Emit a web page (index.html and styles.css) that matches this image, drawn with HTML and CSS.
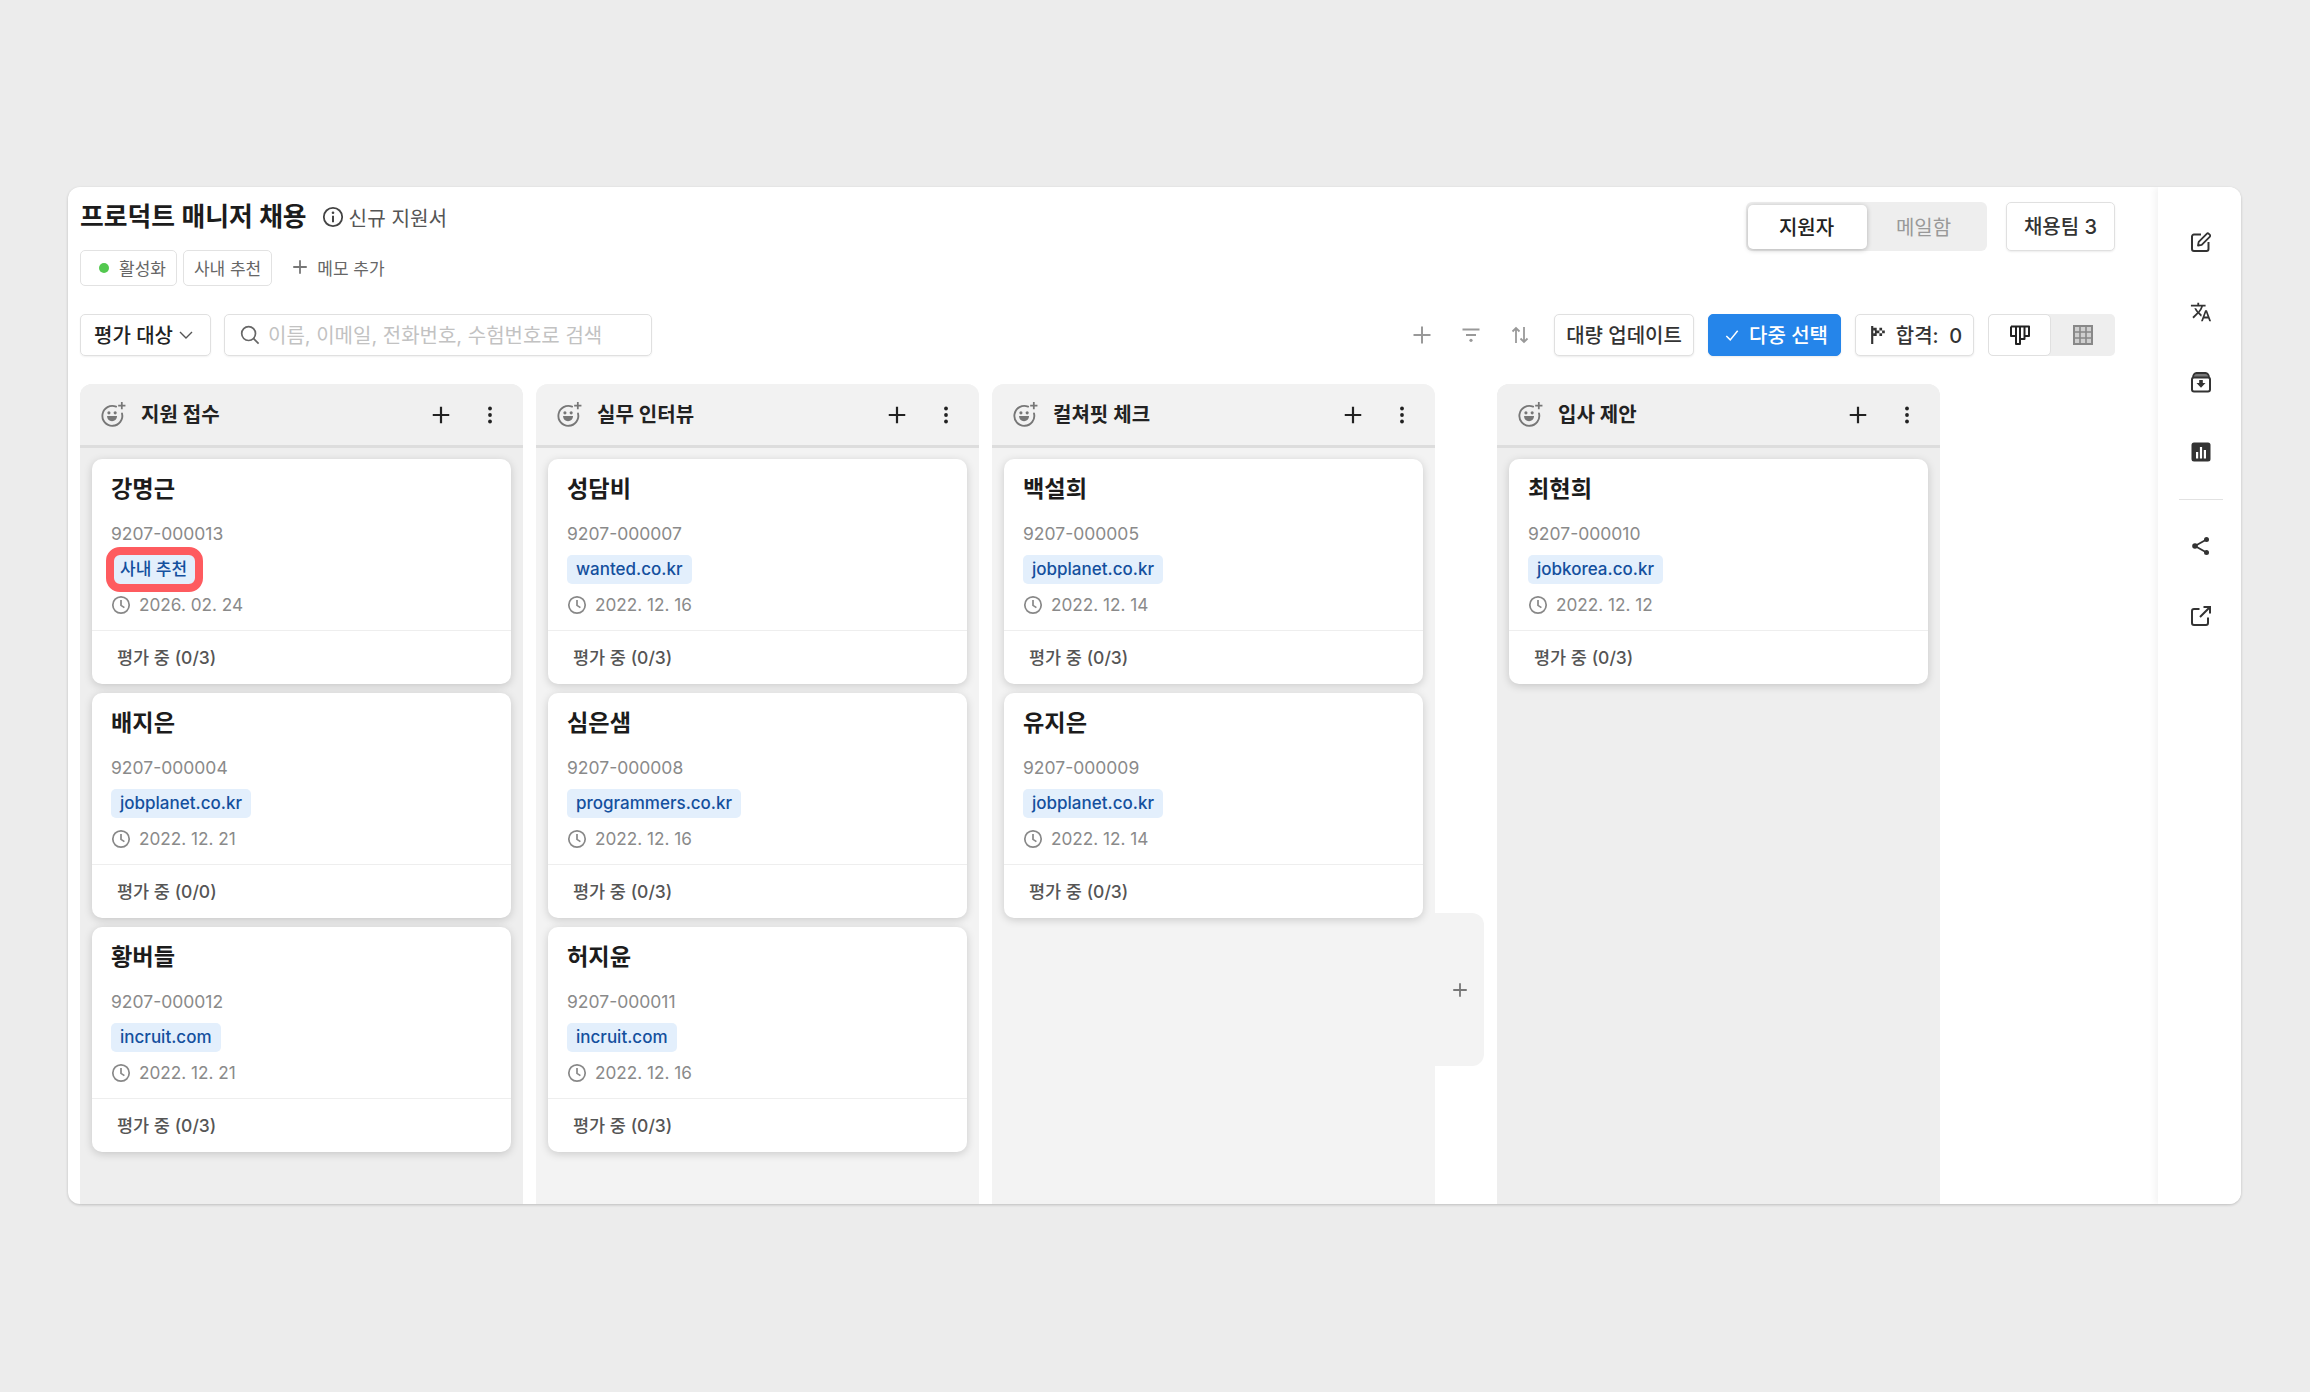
FILE: index.html
```html
<!DOCTYPE html>
<html lang="ko">
<head>
  <meta charset="UTF-8">
  <title>프로덕트 매니저 채용</title>
  <link rel="stylesheet" href="styles.css">
</head>
<body>

  <!-- Shared icons -->
  <svg class="sprite" width="0" height="0">
    <symbol id="i-plus" viewBox="0 0 20 20"><path d="M10 2.500v15M2.500 10h15" fill="none" stroke="currentColor" stroke-width="2"/></symbol>
    <symbol id="i-kebab" viewBox="0 0 20 20"><circle cx="10" cy="3.500" r="1.900" fill="currentColor"/><circle cx="10" cy="10" r="1.900" fill="currentColor"/><circle cx="10" cy="16.500" r="1.900" fill="currentColor"/></symbol>
    <symbol id="i-clock" viewBox="0 0 20 20"><circle cx="10" cy="10" r="8.200" fill="none" stroke="currentColor" stroke-width="1.700"/><path d="M10 5v5.400l3.400 2.200" fill="none" stroke="currentColor" stroke-width="1.700"/></symbol>
    <symbol id="i-smile" viewBox="0 0 26 26">
      <path d="M15.500 5.400A9.600 9.600 0 1 0 21.200 12" fill="none" stroke="currentColor" stroke-width="1.800" stroke-linecap="round"/>
      <circle cx="8.600" cy="11.400" r="1.500" fill="currentColor"/><circle cx="14.600" cy="11.400" r="1.500" fill="currentColor"/>
      <path d="M6.800 14.400h9.600c0 3-2 5-4.800 5s-4.800-2-4.800-5z" fill="currentColor"/>
      <path d="M21 1v7M17.500 4.500h7" fill="none" stroke="currentColor" stroke-width="1.700"/>
    </symbol>
  </svg>

  <div class="panel">
    <div class="main">

      <!-- Header -->
      <div class="head">
        <div class="head-left">
          <div class="title-row">
            <h1 class="title">프로덕트 매니저 채용</h1>
            <svg class="info-icon" viewBox="0 0 22 22"><circle cx="11" cy="11" r="9.200" fill="none" stroke="currentColor" stroke-width="1.800"/><circle cx="11" cy="6.800" r="1.300" fill="currentColor"/><path d="M11 9.800v6.400" stroke="currentColor" stroke-width="2"/></svg>
            <span class="subtitle">신규 지원서</span>
          </div>
          <div class="memo-row">
            <span class="memo"><i class="dot"></i>활성화</span>
            <span class="memo">사내 추천</span>
            <span class="memo-add"><svg class="memo-plus"><use href="#i-plus"/></svg>메모 추가</span>
          </div>
        </div>
        <div class="head-right">
          <div class="seg">
            <span class="seg-item active">지원자</span>
            <span class="seg-item">메일함</span>
          </div>
          <button class="btn team-btn">채용팀 3</button>
        </div>
      </div>

      <!-- Toolbar -->
      <div class="toolbar">
        <div class="select">평가 대상
          <svg class="chevron" viewBox="0 0 14 8"><path d="M1 1l6 6 6-6" fill="none" stroke="currentColor" stroke-width="1.400"/></svg>
        </div>
        <div class="search">
          <svg class="search-icon" viewBox="0 0 20 20"><circle cx="8.600" cy="8.600" r="6.900" fill="none" stroke="currentColor" stroke-width="1.700"/><path d="M13.600 13.600l5 5" stroke="currentColor" stroke-width="1.700"/></svg>
          <span class="placeholder">이름, 이메일, 전화번호, 수험번호로 검색</span>
        </div>
        <div class="tools">
          <svg class="tool-icon" viewBox="0 0 24 24"><path d="M12 3.500v17M3.500 12h17" fill="none" stroke="currentColor" stroke-width="2"/></svg>
          <svg class="tool-icon" viewBox="0 0 24 24"><path d="M3.500 6.500h17M7 12h10" fill="none" stroke="currentColor" stroke-width="2"/><circle cx="12" cy="17.300" r="1.600" fill="currentColor"/></svg>
          <svg class="tool-icon" viewBox="0 0 24 24"><path d="M8 20V5M4.500 8.500L8 5l3.500 3.500M16 4v15M12.500 15.500L16 19l3.500-3.500" fill="none" stroke="currentColor" stroke-width="1.800"/></svg>
        </div>
        <button class="btn bulk-btn">대량 업데이트</button>
        <button class="btn btn-primary">
          <svg class="check" viewBox="0 0 16 14"><path d="M1.500 7.500l4.500 4.500 8.500-10.500" fill="none" stroke="currentColor" stroke-width="1.700"/></svg>다중 선택
        </button>
        <button class="btn pass-btn">
          <svg class="flag" viewBox="0 0 18 20">
            <path d="M2 0v20" stroke="currentColor" stroke-width="2.400"/>
            <path d="M3 2h4v3H3zM5 5h2v3H5zM3 8h4v3H3zM7 5h3v3H7zM10 2h3v3h-3zM13 5h3v3h-3zM10 8h3v3h-3z" fill="currentColor"/>
          </svg>합격:&nbsp; 0
        </button>
        <div class="view-toggle">
          <span class="view-item active">
            <svg class="view-icon" viewBox="0 0 22 22"><path d="M2 2.500h18v9.500h-4.500V2.500M15.500 12v3h-4.500V2.500M11 15v5H7V2.500M7 12H2V2.500" fill="none" stroke="currentColor" stroke-width="2" stroke-linejoin="round"/></svg>
          </span>
          <span class="view-item">
            <svg class="view-icon grey" viewBox="0 0 22 22"><path d="M2 2h18v18H2z" fill="#cfcfcf" stroke="currentColor" stroke-width="2"/><path d="M2 8h18M2 14h18M8 2v18M14 2v18" stroke="currentColor" stroke-width="1.600"/></svg>
          </span>
        </div>
      </div>

      <!-- Board -->
      <div class="board">

        <div class="column">
          <div class="col-head">
            <svg class="smile"><use href="#i-smile"/></svg>
            <span class="col-title">지원 접수</span>
            <svg class="col-plus"><use href="#i-plus"/></svg>
            <svg class="col-kebab"><use href="#i-kebab"/></svg>
          </div>
          <div class="col-body">
            <div class="card">
              <div class="card-main">
                <div class="name">강명근</div>
                <div class="number">9207-000013</div>
                <span class="tag tag-marked">사내 추천</span>
                <div class="date"><svg class="clock"><use href="#i-clock"/></svg>2026. 02. 24</div>
              </div>
              <div class="card-foot">평가 중 (0/3)</div>
            </div>
            <div class="card">
              <div class="card-main">
                <div class="name">배지은</div>
                <div class="number">9207-000004</div>
                <span class="tag">jobplanet.co.kr</span>
                <div class="date"><svg class="clock"><use href="#i-clock"/></svg>2022. 12. 21</div>
              </div>
              <div class="card-foot">평가 중 (0/0)</div>
            </div>
            <div class="card">
              <div class="card-main">
                <div class="name">황버들</div>
                <div class="number">9207-000012</div>
                <span class="tag">incruit.com</span>
                <div class="date"><svg class="clock"><use href="#i-clock"/></svg>2022. 12. 21</div>
              </div>
              <div class="card-foot">평가 중 (0/3)</div>
            </div>
          </div>
        </div>

        <div class="column light">
          <div class="col-head">
            <svg class="smile"><use href="#i-smile"/></svg>
            <span class="col-title">실무 인터뷰</span>
            <svg class="col-plus"><use href="#i-plus"/></svg>
            <svg class="col-kebab"><use href="#i-kebab"/></svg>
          </div>
          <div class="col-body">
            <div class="card">
              <div class="card-main">
                <div class="name">성담비</div>
                <div class="number">9207-000007</div>
                <span class="tag">wanted.co.kr</span>
                <div class="date"><svg class="clock"><use href="#i-clock"/></svg>2022. 12. 16</div>
              </div>
              <div class="card-foot">평가 중 (0/3)</div>
            </div>
            <div class="card">
              <div class="card-main">
                <div class="name">심은샘</div>
                <div class="number">9207-000008</div>
                <span class="tag">programmers.co.kr</span>
                <div class="date"><svg class="clock"><use href="#i-clock"/></svg>2022. 12. 16</div>
              </div>
              <div class="card-foot">평가 중 (0/3)</div>
            </div>
            <div class="card">
              <div class="card-main">
                <div class="name">허지윤</div>
                <div class="number">9207-000011</div>
                <span class="tag">incruit.com</span>
                <div class="date"><svg class="clock"><use href="#i-clock"/></svg>2022. 12. 16</div>
              </div>
              <div class="card-foot">평가 중 (0/3)</div>
            </div>
          </div>
        </div>

        <div class="column light">
          <div class="col-head">
            <svg class="smile"><use href="#i-smile"/></svg>
            <span class="col-title">컬쳐핏 체크</span>
            <svg class="col-plus"><use href="#i-plus"/></svg>
            <svg class="col-kebab"><use href="#i-kebab"/></svg>
          </div>
          <div class="col-body">
            <div class="card">
              <div class="card-main">
                <div class="name">백설희</div>
                <div class="number">9207-000005</div>
                <span class="tag">jobplanet.co.kr</span>
                <div class="date"><svg class="clock"><use href="#i-clock"/></svg>2022. 12. 14</div>
              </div>
              <div class="card-foot">평가 중 (0/3)</div>
            </div>
            <div class="card">
              <div class="card-main">
                <div class="name">유지은</div>
                <div class="number">9207-000009</div>
                <span class="tag">jobplanet.co.kr</span>
                <div class="date"><svg class="clock"><use href="#i-clock"/></svg>2022. 12. 14</div>
              </div>
              <div class="card-foot">평가 중 (0/3)</div>
            </div>
          </div>
        </div>

        <div class="add-tab"><svg class="tab-plus"><use href="#i-plus"/></svg></div>

        <div class="column">
          <div class="col-head">
            <svg class="smile"><use href="#i-smile"/></svg>
            <span class="col-title">입사 제안</span>
            <svg class="col-plus"><use href="#i-plus"/></svg>
            <svg class="col-kebab"><use href="#i-kebab"/></svg>
          </div>
          <div class="col-body">
            <div class="card">
              <div class="card-main">
                <div class="name">최현희</div>
                <div class="number">9207-000010</div>
                <span class="tag">jobkorea.co.kr</span>
                <div class="date"><svg class="clock"><use href="#i-clock"/></svg>2022. 12. 12</div>
              </div>
              <div class="card-foot">평가 중 (0/3)</div>
            </div>
          </div>
        </div>

      </div>
    </div>

    <!-- Right Sidebar -->
    <div class="side">
      <svg class="side-icon" viewBox="0 0 22 22"><path d="M11 3.500H4a2 2 0 0 0-2 2V18a2 2 0 0 0 2 2h12.500a2 2 0 0 0 2-2v-7" fill="none" stroke="currentColor" stroke-width="2"/><path d="M8 14.500l.7-3.700 8-8c.6-.6 1.500-.6 2.100 0l.9.9c.6.600.6 1.500 0 2.100l-8 8z" fill="none" stroke="currentColor" stroke-width="1.800" stroke-linejoin="round"/></svg>
      <svg class="side-icon" viewBox="0 0 24 24"><path d="M12.870 15.070l-2.540-2.510.03-.03c1.740-1.940 2.980-4.170 3.710-6.530H17V4h-7V2H8v2H1v1.990h11.170C11.500 7.920 10.440 9.750 9 11.350 8.070 10.320 7.300 9.190 6.690 8h-2c.73 1.630 1.730 3.170 2.980 4.560l-5.090 5.020L4 19l5-5 3.110 3.110.76-2.040zM18.500 10h-2L12 22h2l1.120-3h4.750L21 22h2l-4.500-12zm-2.620 7l1.620-4.330L19.120 17h-3.240z" fill="currentColor"/></svg>
      <svg class="side-icon" viewBox="0 0 22 22"><path d="M3 6.500C3 4 4.500 2 6.500 2h9C17.500 2 19 4 19 6.500" fill="#777" stroke="currentColor" stroke-width="1.800"/><rect x="2" y="6.500" width="18" height="14" rx="2" fill="#fff" stroke="currentColor" stroke-width="2"/><path d="M9.200 9h3.600v3h2.700L11 16.800 6.500 12h2.700z" fill="currentColor"/></svg>
      <svg class="side-icon" viewBox="0 0 22 22"><rect x="1.500" y="1.500" width="19" height="19" rx="2.500" fill="currentColor"/><path d="M6 11v6.500h2.200V11zM9.900 6v11.500h2.200V6zM13.800 9v8.500H16V9z" fill="#fff"/></svg>
      <div class="side-line"></div>
      <svg class="side-icon" viewBox="0 0 22 22"><path d="M16.500 4.500L5 11l11.500 6.500" fill="none" stroke="currentColor" stroke-width="1.800"/><circle cx="16.500" cy="4.500" r="2.500" fill="currentColor"/><circle cx="5" cy="11" r="2.800" fill="currentColor"/><circle cx="16.500" cy="17.500" r="2.500" fill="currentColor"/></svg>
      <svg class="side-icon" viewBox="0 0 22 22"><path d="M9.500 4H4a2 2 0 0 0-2 2v12a2 2 0 0 0 2 2h12a2 2 0 0 0 2-2v-5.500" fill="none" stroke="currentColor" stroke-width="2"/><path d="M13.500 2H20v6.500M20 2l-10 10" fill="none" stroke="currentColor" stroke-width="2"/></svg>
    </div>
  </div>

</body>
</html>
```

FILE: styles.css
```css
/* Basic Reset */
* {
  margin: 0;
  padding: 0;
  box-sizing: border-box;
}
body {
  font-family: Inter, "Noto Sans CJK KR", sans-serif;
  background-color: #ececec;
  color: #222;
  width: 2310px;
  height: 1392px;
  padding: 187px 0 0 68px;
  overflow: hidden;
}
.sprite {
  display: block;
  position: absolute;
}

/* Panel */
.panel {
  width: 2173px;
  height: 1017px;
  background-color: #fff;
  border-radius: 12px;
  box-shadow: 0 1px 3px rgba(0, 0, 0, 0.2);
  display: flex;
  overflow: hidden;
}
.main {
  flex: 1;
  min-width: 0;
  padding: 15px 43px 0 12px;
  display: flex;
  flex-direction: column;
}

/* Header */
.head {
  display: flex;
  justify-content: space-between;
  align-items: flex-start;
}
.title-row {
  display: flex;
  align-items: center;
  height: 28px;
  margin-top: 1px;
}
.title {
  font-size: 25.800px;
  font-weight: 600;
  line-height: 28px;
  color: #1c1c1c;
  white-space: nowrap;
}
.info-icon {
  width: 22px;
  height: 22px;
  margin-left: 15px;
  color: #444;
}
.subtitle {
  font-size: 20.200px;
  color: #555;
  margin-left: 5px;
}
.memo-row {
  display: flex;
  align-items: center;
  gap: 6px;
  margin-top: 19px;
}
.memo {
  height: 36px;
  display: flex;
  align-items: center;
  padding: 0 10px 2px;
  border: 1px solid #e2e2e2;
  border-radius: 5px;
  font-size: 17px;
  color: #666;
}
.dot {
  width: 10px;
  height: 10px;
  border-radius: 50%;
  background-color: #53c84f;
  margin: 2px 10px 0 8px;
}
.memo-add {
  display: flex;
  align-items: center;
  font-size: 17px;
  color: #666;
  margin-left: 13px;
  padding-bottom: 2px;
}
.memo-plus {
  width: 18px;
  height: 18px;
  color: #777;
  margin-right: 8px;
}
.head-right {
  display: flex;
  gap: 19px;
}
.seg {
  width: 241px;
  height: 49px;
  background-color: #eee;
  border-radius: 6px;
  padding: 3px 0 2px 2px;
  display: flex;
}
.seg-item {
  width: 119px;
  display: flex;
  align-items: center;
  justify-content: center;
  padding: 0 6px 2px 0;
  font-size: 20px;
  color: #999;
}
.seg-item.active {
  background-color: #fff;
  border-radius: 5px;
  padding-right: 2px;
  color: #222;
  font-weight: 500;
  box-shadow: 0 1px 5px rgba(0, 0, 0, 0.25);
}

/* Buttons */
.btn {
  height: 42px;
  padding: 0 0 2px;
  background-color: #fff;
  border: 1px solid #e0e0e0;
  border-radius: 5px;
  box-shadow: 0 1px 2px rgba(0, 0, 0, 0.08);
  font-family: inherit;
  font-size: 20px;
  font-weight: 500;
  color: #333;
  display: flex;
  align-items: center;
  justify-content: center;
  white-space: nowrap;
}
.team-btn {
  width: 109px;
  height: 49px;
}
.bulk-btn {
  width: 140px;
}
.btn-primary {
  width: 133px;
  padding-left: 4px;
  background-color: #2585ea;
  border-color: #2585ea;
  color: #fff;
}
.check {
  width: 14px;
  height: 13px;
  margin: 2px 10px 0 0;
}
.pass-btn {
  width: 119px;
  padding-left: 3px;
}
.flag {
  width: 17px;
  height: 18px;
  margin: 2px 9px 0 0;
}

/* Toolbar */
.toolbar {
  display: flex;
  align-items: center;
  margin-top: 28px;
  height: 42px;
}
.select {
  width: 131px;
  height: 42px;
  border: 1px solid #e0e0e0;
  border-radius: 5px;
  display: flex;
  align-items: center;
  padding: 0 0 2px 13px;
  font-size: 20px;
  font-weight: 500;
  white-space: nowrap;
  box-shadow: 0 1px 2px rgba(0, 0, 0, 0.06);
}
.chevron {
  width: 14px;
  height: 8px;
  margin: 2px 0 0 6px;
  color: #555;
}
.search {
  width: 428px;
  height: 42px;
  margin-left: 13px;
  border: 1px solid #e0e0e0;
  border-radius: 5px;
  display: flex;
  align-items: center;
  padding-left: 15px;
  box-shadow: 0 1px 2px rgba(0, 0, 0, 0.06);
}
.search-icon {
  width: 20px;
  height: 20px;
  color: #666;
}
.placeholder {
  font-size: 20px;
  color: #c2c2c2;
  margin: 0 0 2px 8px;
  white-space: nowrap;
}
.tools {
  margin-left: auto;
  margin-right: 22px;
  display: flex;
  gap: 25px;
}
.tool-icon {
  width: 24px;
  height: 24px;
  color: #999;
}
.toolbar .btn {
  margin-right: 14px;
}
.view-toggle {
  width: 127px;
  height: 42px;
  background-color: #eee;
  border-radius: 5px;
  display: flex;
}
.view-item {
  width: 63px;
  display: flex;
  align-items: center;
  justify-content: center;
}
.view-item.active {
  background-color: #fff;
  border: 1px solid #e0e0e0;
  border-radius: 5px;
}
.view-icon {
  width: 22px;
  height: 22px;
  color: #222;
}
.view-icon.grey {
  color: #888;
}

/* Board */
.board {
  flex: 1;
  display: flex;
  gap: 13px;
  margin-top: 28px;
  min-height: 0;
}
.column {
  width: 443px;
  background-color: #eee;
  border-radius: 12px 12px 0 0;
  display: flex;
  flex-direction: column;
}
.column.light {
  background-color: #f3f3f3;
}
.col-head {
  height: 64px;
  background-color: #f0f0f0;
  border-radius: 12px 12px 0 0;
  border-bottom: 3px solid #ddd;
  display: flex;
  align-items: center;
  padding: 0 23px 0 20px;
}
.column.light .col-head {
  background-color: #f2f2f2;
}
.smile {
  width: 27px;
  height: 27px;
  color: #777;
}
.col-title {
  font-size: 20px;
  font-weight: 600;
  color: #222;
  margin: 0 0 2px 14px;
  flex: 1;
}
.col-plus {
  width: 22px;
  height: 22px;
  color: #222;
}
.col-kebab {
  width: 20px;
  height: 20px;
  margin-left: 28px;
  color: #222;
}
.col-body {
  padding: 11px 12px 0;
  display: flex;
  flex-direction: column;
  gap: 9px;
}

/* Card */
.card {
  height: 225px;
  background-color: #fff;
  border-radius: 10px;
  box-shadow: 0 2px 8px rgba(0, 0, 0, 0.17);
  display: flex;
  flex-direction: column;
}
.card-main {
  height: 172px;
  padding: 15px 19px 0;
  border-bottom: 1px solid #eee;
}
.name {
  font-size: 23.200px;
  font-weight: 600;
  line-height: 30px;
  color: #1c1c1c;
}
.number {
  font-size: 17.500px;
  line-height: 22px;
  color: #8a8a8a;
  margin-top: 19px;
}
.tag {
  display: table;
  position: relative;
  height: 29px;
  line-height: 28px;
  padding: 0 9px;
  margin-top: 10px;
  background-color: #e3effc;
  border-radius: 5px;
  font-size: 17px;
  font-weight: 500;
  color: #14509e;
}
/* red highlight drawn over the tag */
.tag-marked::after {
  content: "";
  position: absolute;
  top: -8px;
  bottom: -8px;
  left: -5px;
  right: -7px;
  border: 8px solid #fe5b5f;
  border-radius: 14px;
}
.date {
  display: flex;
  align-items: center;
  font-size: 17.200px;
  line-height: 22px;
  color: #8a8a8a;
  margin-top: 10px;
}
.clock {
  width: 20px;
  height: 20px;
  margin-right: 8px;
  color: #888;
}
.card-foot {
  flex: 1;
  display: flex;
  align-items: center;
  padding: 0 0 2px 25px;
  font-size: 17.500px;
  font-weight: 500;
  color: #555;
}

/* Add column tab */
.add-tab {
  width: 49px;
  height: 153px;
  margin: 529px 0 0 -13px;
  background-color: #f3f3f3;
  border-radius: 0 12px 12px 0;
  display: flex;
  align-items: center;
  justify-content: center;
}
.tab-plus {
  width: 18px;
  height: 18px;
  color: #777;
}

/* Right Sidebar */
.side {
  width: 83px;
  background-color: #fff;
  box-shadow: -3px 0 7px rgba(0, 0, 0, 0.05);
  display: flex;
  flex-direction: column;
  align-items: center;
  padding: 44px 0 0 2px;
  gap: 48px;
  position: relative;
}
.side-icon {
  width: 22px;
  height: 22px;
  color: #333;
}
.side-line {
  width: 44px;
  height: 1px;
  background-color: #e2e2e2;
  margin: -12px 0 -13px;
}
```
